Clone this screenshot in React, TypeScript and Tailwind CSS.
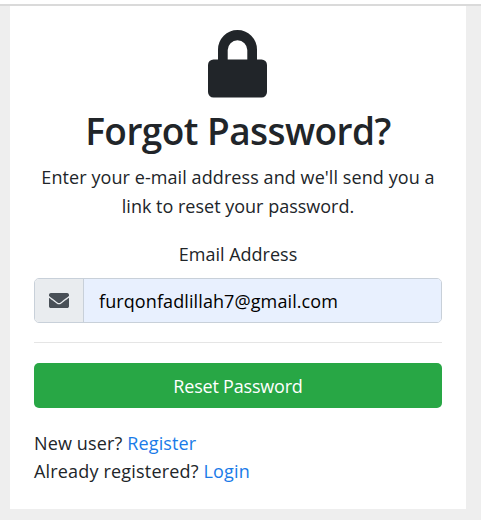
import React from "react";

function LockIcon() {
  return (
    <svg width="59" height="68" viewBox="0 0 59 68" fill="#212529" className="block" aria-hidden="true">
      <path
        fillRule="evenodd"
        d="M10 29.5V19.6a19.5 19.6 0 0 1 39 0v9.9h4.5a5.5 5.5 0 0 1 5.5 5.5v27a5.5 5.5 0 0 1-5.5 5.5h-48A5.5 5.5 0 0 1 0 62V35a5.5 5.5 0 0 1 5.5-5.5H10Zm9.7 0h19.6v-9.4a9.8 9.8 0 0 0-19.6 0v9.4Z"
      />
    </svg>
  );
}

function EnvelopeIcon() {
  return (
    <svg width="20" height="15" viewBox="0 0 512 384" fill="#495057" className="block" aria-hidden="true">
      <path d="M502.3 126.8c3.9-3.1 9.7-.2 9.7 4.7V336c0 26.5-21.5 48-48 48H48c-26.5 0-48-21.5-48-48V131.6c0-5 5.7-7.8 9.7-4.7 22.4 17.4 52.1 39.5 154.1 113.6 21.1 15.4 56.7 47.8 92.2 47.6 35.7.3 72-32.8 92.3-47.6 102-74.1 131.6-96.3 154-113.7zM256 256c23.2.4 56.6-29.2 73.4-41.4 132.7-96.3 142.8-104.7 173.4-128.7 5.8-4.5 9.2-11.5 9.2-18.9V48c0-26.5-21.5-48-48-48H48C21.5 0 0 21.5 0 48v19c0 7.4 3.4 14.3 9.2 18.9 30.6 23.9 40.7 32.4 173.4 128.7 16.8 12.2 50.2 41.8 73.4 41.4z" />
    </svg>
  );
}

export default function App() {
  return (
    <div className="h-[520px] w-[481px] overflow-hidden bg-[#eeeeee] font-['Open_Sans','Noto_Sans',sans-serif] text-[18px] leading-7 text-[#212529]">
      <div className="h-1.5 border-b-2 border-[#dadada] bg-white" />
      <main className="ml-2.5 flex h-[503px] w-[456px] flex-col bg-white px-6 pt-6">
        <div className="-ml-px flex justify-center">
          <LockIcon />
        </div>
        <h2 className="mt-[11px] whitespace-nowrap text-center text-[37px] leading-[44px] font-semibold tracking-[-0.55px]">
          Forgot Password?
        </h2>
        <p className="mt-2.5 whitespace-nowrap text-center leading-[28.5px]">
          <span className="tracking-[0.08px]">Enter your e-mail address and we'll send you a</span>
          <br />
          <span>link to reset your password.</span>
        </p>
        <label htmlFor="email" className="mt-5 text-center">
          Email Address
        </label>
        <div className="mt-2.5 flex h-[45px] shrink-0 overflow-hidden rounded-[5px] border border-[#c8d0d9]">
          <div className="flex w-[49px] shrink-0 items-center justify-center border-r border-[#c8d0d9] bg-[#e9ecef]">
            <EnvelopeIcon />
          </div>
          <input
            id="email"
            type="email"
            defaultValue="furqonfadlillah7@gmail.com"
            className="min-w-0 flex-1 bg-[#e8f0fe] px-[15px] tracking-[0.1px] text-black outline-none"
          />
        </div>
        <hr className="mt-[19px] border-[#e5e5e5]" />
        <button type="button" className="mt-5 h-[45px] shrink-0 rounded-[5px] bg-[#28a745] tracking-[-0.2px] text-white">
          Reset Password
        </button>
        <div className="mt-[21px] whitespace-nowrap">
          <div className="tracking-[0.14px]">
            <span>New user? </span>
            <a href="#" className="text-[#1a7be8]">Register</a>
          </div>
          <div className="tracking-[0.18px]">
            <span>Already registered? </span>
            <a href="#" className="text-[#1a7be8]">Login</a>
          </div>
        </div>
      </main>
    </div>
  );
}
